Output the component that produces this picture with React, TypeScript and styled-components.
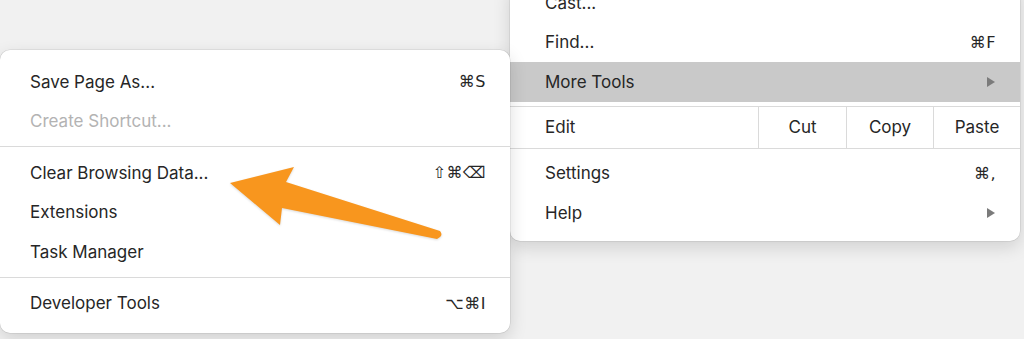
import React from "react";
import styled, { createGlobalStyle } from "styled-components";

const GlobalStyle = createGlobalStyle`
    html, body {
        margin: 0;
        padding: 0;
        background: #f1f1f1;
        overflow: hidden;
    }
    body {
        font-family: Inter, "Liberation Sans", "DejaVu Sans", sans-serif;
        -webkit-font-smoothing: antialiased;
    }
`

const Stage = styled.div`
    position: relative;
    width: 1024px;
    height: 339px;
    overflow: hidden;
    background: #f1f1f1;
`

const Menu = styled.div<{ left: number; top: number; width: number }>`
    position: absolute;
    left: ${({ left }) => left}px;
    top: ${({ top }) => top}px;
    width: ${({ width }) => width}px;
    display: flex;
    flex-direction: column;
    background: #ffffff;
    border-radius: 10px;
    box-shadow: 0 0 0 0.5px rgba(0, 0, 0, 0.12), 0 6px 18px rgba(0, 0, 0, 0.14);
`

const MainMenu = styled(Menu)`
    padding: 0 0 8px;
`

const SubMenu = styled(Menu)`
    padding: 12px 0 10px;
    z-index: 2;
`

const Row = styled.div<{ active?: boolean; disabled?: boolean; inset: number }>`
    display: flex;
    align-items: center;
    justify-content: space-between;
    height: 39.5px;
    padding: 0 24px 0 ${({ inset }) => inset}px;
    font-size: 17px;
    color: ${({ disabled }) => (disabled ? "#b3b3b3" : "#262626")};
    background: ${({ active }) => (active ? "#c9c9c9" : "transparent")};
`

const Shortcut = styled.span`
    font-family: "DejaVu Sans", Inter, sans-serif;
    font-size: 16px;
    letter-spacing: 0.5px;
    color: #262626;
`

const Chevron = styled.span`
    width: 0;
    height: 0;
    margin-right: 1px;
    border-top: 5px solid transparent;
    border-bottom: 5px solid transparent;
    border-left: 8px solid #7b7b7b;
`

const Separator = styled.div`
    height: 1px;
    margin: 5px 0 6px;
    background: #dadada;
`

const EditRow = styled.div`
    display: grid;
    grid-template-columns: 1fr 88px 87px 87px;
    height: 41px;
    margin: 4px 0 5px;
    border-top: 1px solid #dadada;
    border-bottom: 1px solid #dadada;
    font-size: 17px;
    color: #262626;
`

const EditLabel = styled.div`
    display: flex;
    align-items: center;
    padding-left: 35px;
`

const EditCell = styled.div`
    display: flex;
    align-items: center;
    justify-content: center;
    border-left: 1px solid #dadada;
`

const Arrow = styled.svg`
    position: absolute;
    left: 0;
    top: 0;
    z-index: 3;
    filter: drop-shadow(0 1px 1px rgba(0, 0, 0, 0.15));
`

export default function App() {
    return (
        <Stage>
            <GlobalStyle />
            <MainMenu left={510} top={-17} width={510}>
                <Row inset={35}>Cast...</Row>
                <Row inset={35}>
                    Find...<Shortcut>⌘F</Shortcut>
                </Row>
                <Row inset={35} active>
                    More Tools<Chevron />
                </Row>
                <EditRow>
                    <EditLabel>Edit</EditLabel>
                    <EditCell>Cut</EditCell>
                    <EditCell>Copy</EditCell>
                    <EditCell>Paste</EditCell>
                </EditRow>
                <Row inset={35}>
                    Settings<Shortcut>⌘,</Shortcut>
                </Row>
                <Row inset={35}>
                    Help<Chevron />
                </Row>
            </MainMenu>

            <SubMenu left={0} top={50} width={510}>
                <Row inset={30}>
                    Save Page As...<Shortcut>⌘S</Shortcut>
                </Row>
                <Row inset={30} disabled>Create Shortcut...</Row>
                <Separator />
                <Row inset={30}>
                    Clear Browsing Data...<Shortcut>⇧⌘⌫</Shortcut>
                </Row>
                <Row inset={30}>Extensions</Row>
                <Row inset={30}>Task Manager</Row>
                <Separator />
                <Row inset={30}>
                    Developer Tools<Shortcut>⌥⌘I</Shortcut>
                </Row>
            </SubMenu>

            <Arrow width="1024" height="339" viewBox="0 0 1024 339">
                <path
                    d="M230 183 L294 167 L286 182 L440 231 Q444 236 437 239 L282 208 L280 225 Z"
                    fill="#f8961e"
                    strokeLinejoin="round"
                />
            </Arrow>
        </Stage>
    );
}
